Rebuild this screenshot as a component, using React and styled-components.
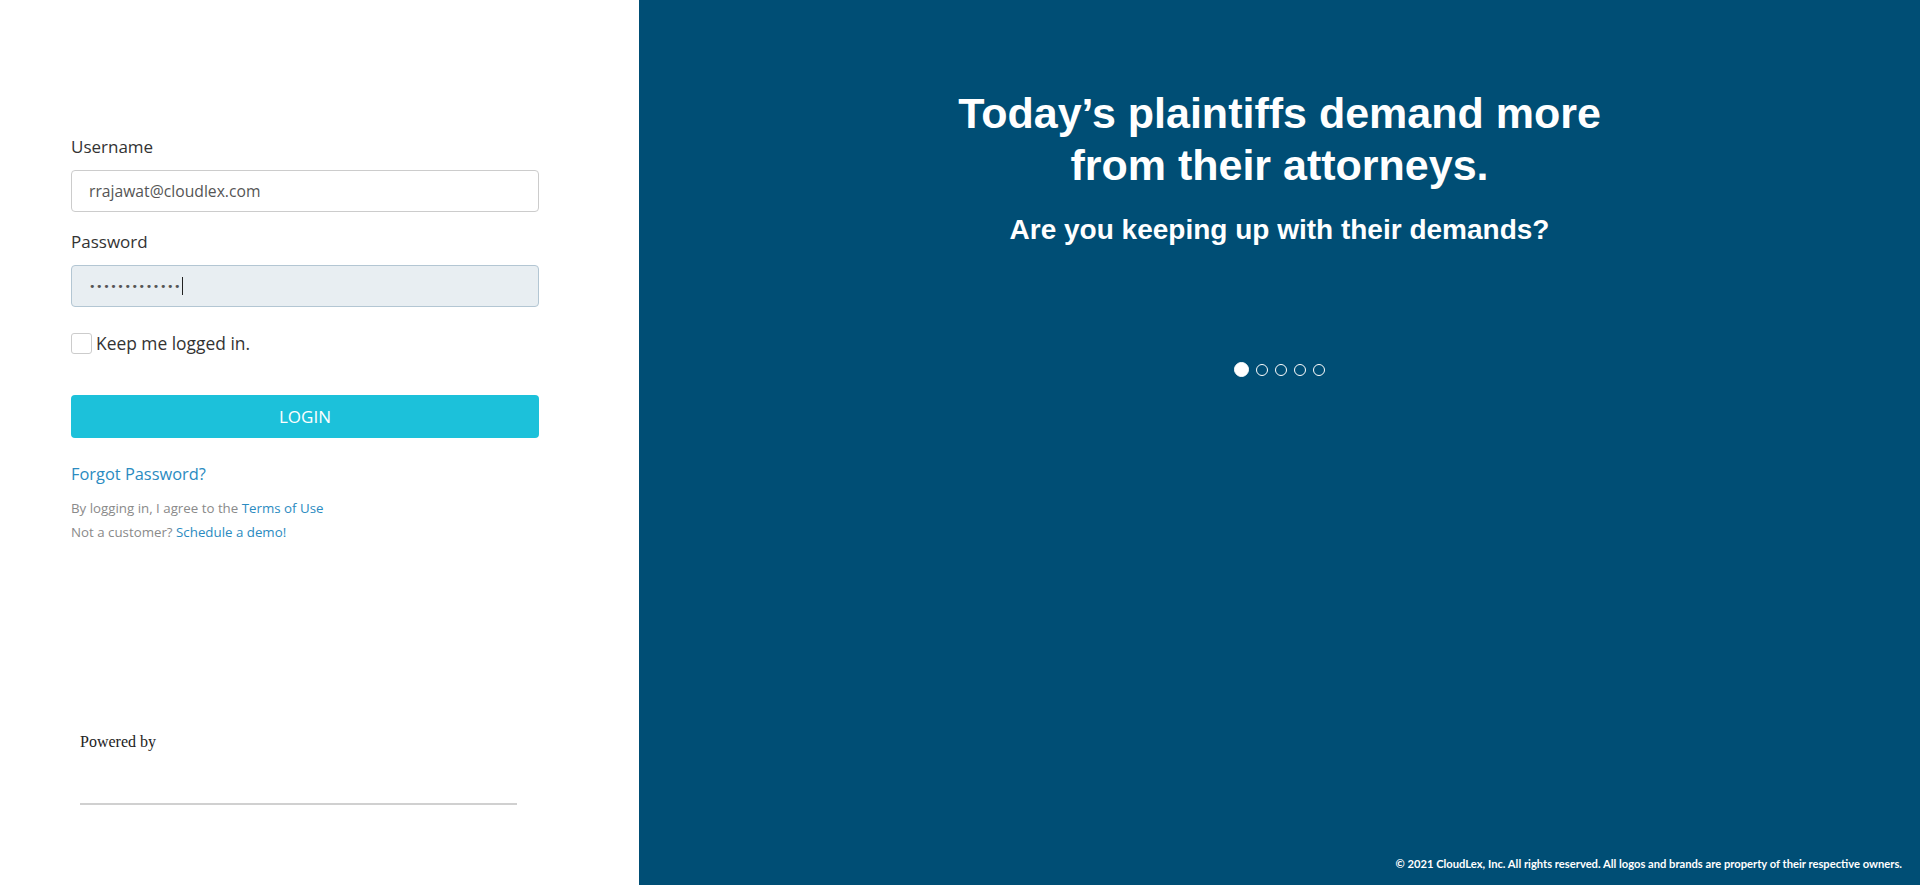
import React from 'react'
import styled, { createGlobalStyle } from 'styled-components'

const colors = {
  navy: '#004e75',
  cyan: '#1cc1da',
  link: '#2b8bc1',
  text: '#333333',
  muted: '#8a8a8a',
  border: '#cccccc',
}

const GlobalStyle = createGlobalStyle`
  html, body {
    margin: 0;
    padding: 0;
    height: 100%;
  }
  body {
    font-family: "Open Sans", Lato, sans-serif;
    color: ${colors.text};
  }
`

const Page = styled.main`
  display: flex;
  height: 100vh;
  min-height: 885px;
`

const LoginPanel = styled.section`
  width: 639px;
  flex-shrink: 0;
  background: #ffffff;
  display: flex;
  flex-direction: column;
  padding: 137px 0 0 71px;
  box-sizing: border-box;
`

const Form = styled.form`
  width: 468px;
  display: flex;
  flex-direction: column;
`

const Label = styled.label`
  font-size: 17px;
  line-height: 20px;
  color: ${colors.text};
  margin-bottom: 13px;
`

const Field = styled.div`
  height: 42px;
  box-sizing: border-box;
  border: 1px solid ${(p) => (p.$filled ? '#b3c6d3' : colors.border)};
  background: ${(p) => (p.$filled ? '#e8eef2' : '#ffffff')};
  border-radius: 4px;
  padding: 0 17px;
  display: flex;
  align-items: center;
  font-size: 15.7px;
  color: #555555;
  margin-bottom: ${(p) => p.$gap || 0}px;
`

const Dots = styled.span`
  font-family: "DejaVu Sans", sans-serif;
  font-size: 11px;
  letter-spacing: 0.6px;
  color: #555555;
`

const Caret = styled.span`
  display: inline-block;
  width: 1px;
  height: 18px;
  background: #222;
  margin-left: 1px;
`

const CheckRow = styled.label`
  display: flex;
  align-items: center;
  margin-top: 25px;
  font-size: 17.4px;
  line-height: 22px;
  color: ${colors.text};
`

const CheckBox = styled.span`
  width: 21px;
  height: 21px;
  box-sizing: border-box;
  border: 1px solid ${colors.border};
  border-radius: 3px;
  margin-right: 4px;
  background: #fff;
`

const LoginButton = styled.button`
  margin-top: 41px;
  height: 43px;
  border: none;
  border-radius: 4px;
  background: ${colors.cyan};
  color: #ffffff;
  font-family: "Open Sans", sans-serif;
  font-size: 17px;
  cursor: pointer;
`

const Forgot = styled.a`
  margin-top: 26px;
  font-size: 16.4px;
  line-height: 20px;
  color: ${colors.link};
  text-decoration: none;
`

const Notes = styled.div`
  margin-top: 12px;
  font-size: 13.3px;
  line-height: 24px;
  color: ${colors.muted};

  a {
    color: ${colors.link};
    text-decoration: none;
  }
`

const PoweredBy = styled.footer`
  margin-top: auto;
  padding: 0 0 80px 9px;
  width: 437px;
`

const PoweredText = styled.p`
  margin: 0 0 51px;
  font-family: "Liberation Serif", serif;
  font-size: 16px;
  line-height: 20px;
  color: #222;
`

const Rule = styled.hr`
  margin: 0;
  border: none;
  border-top: 2px solid #d0d0d0;
`

const PromoPanel = styled.section`
  flex: 1;
  background: ${colors.navy};
  color: #ffffff;
  display: flex;
  flex-direction: column;
  align-items: center;
  padding-top: 87px;
  font-family: "Liberation Sans", Arial, sans-serif;
`

const Headline = styled.h1`
  margin: 0;
  font-size: 43px;
  line-height: 52px;
  font-weight: 700;
  text-align: center;
`

const Subline = styled.h2`
  margin: 22px 0 0;
  font-size: 28px;
  line-height: 34px;
  font-weight: 700;
`

const Dotnav = styled.div`
  margin-top: 115px;
  display: flex;
  align-items: center;
  gap: 7px;
`

const Dot = styled.span`
  width: ${(p) => (p.$active ? 15 : 12)}px;
  height: ${(p) => (p.$active ? 15 : 12)}px;
  box-sizing: border-box;
  border-radius: 50%;
  border: 1px solid #ffffff;
  background: ${(p) => (p.$active ? '#ffffff' : 'transparent')};
`

const Copyright = styled.p`
  margin: auto 0 0;
  align-self: flex-end;
  padding: 0 18px 14px 0;
  font-family: Lato, sans-serif;
  font-weight: 700;
  font-size: 11.2px;
  line-height: 14px;
`

const slides = [0, 1, 2, 3, 4]

export default function App() {
  return (
    <>
      <GlobalStyle />
      <Page>
        <LoginPanel>
          <Form onSubmit={(e) => e.preventDefault()}>
            <Label>Username</Label>
            <Field $gap={20}>rrajawat@cloudlex.com</Field>
            <Label>Password</Label>
            <Field $filled>
              <Dots>•••••••••••••</Dots>
              <Caret />
            </Field>
            <CheckRow>
              <CheckBox />
              Keep me logged in.
            </CheckRow>
            <LoginButton type="submit">LOGIN</LoginButton>
            <Forgot href="#">Forgot Password?</Forgot>
            <Notes>
              <div>
                By logging in, I agree to the <a href="#">Terms of Use</a>
              </div>
              <div>
                Not a customer? <a href="#">Schedule a demo!</a>
              </div>
            </Notes>
          </Form>
          <PoweredBy>
            <PoweredText>Powered by</PoweredText>
            <Rule />
          </PoweredBy>
        </LoginPanel>
        <PromoPanel>
          <Headline>
            Today’s plaintiffs demand more
            <br />
            from their attorneys.
          </Headline>
          <Subline>Are you keeping up with their demands?</Subline>
          <Dotnav>
            {slides.map((i) => (
              <Dot key={i} $active={i === 0} />
            ))}
          </Dotnav>
          <Copyright>
            © 2021 CloudLex, Inc. All rights reserved. All logos and brands are property of their respective owners.
          </Copyright>
        </PromoPanel>
      </Page>
    </>
  )
}
